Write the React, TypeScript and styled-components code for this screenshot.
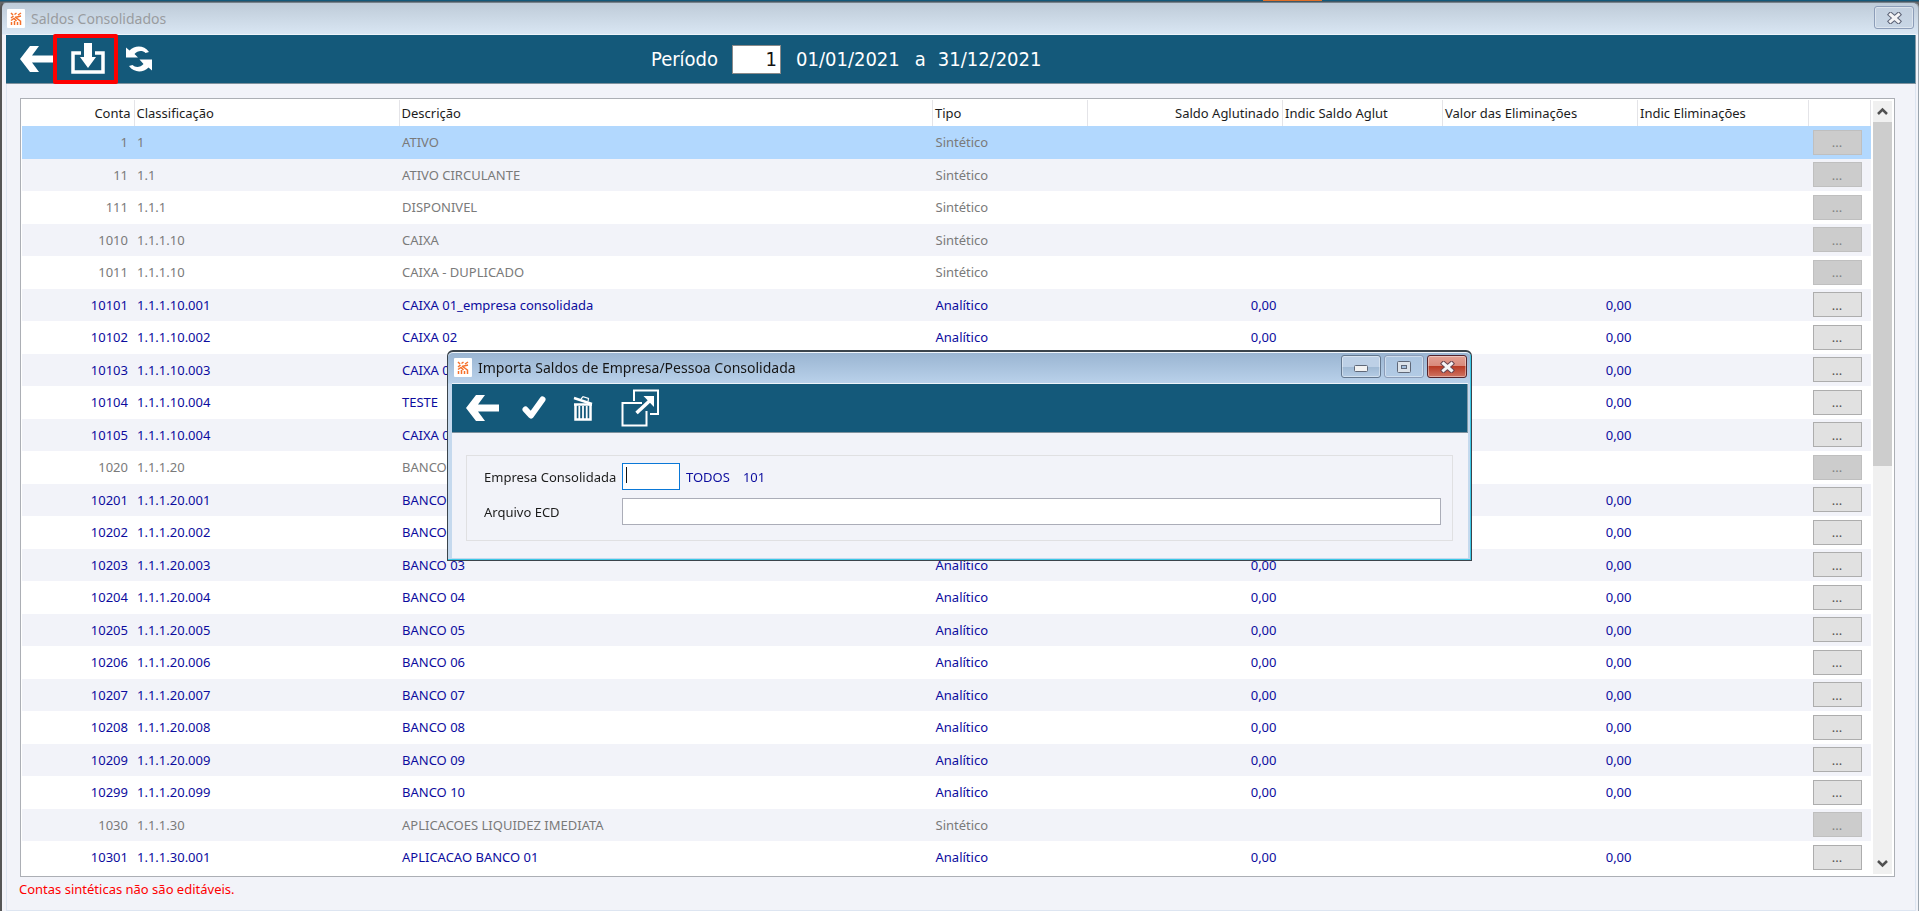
import React from 'react';
import styled, { createGlobalStyle } from 'styled-components';

const GlobalStyle = createGlobalStyle`
  *, *::before, *::after { box-sizing: border-box; }
  body {
    margin: 0;
    background: #f2f3f9;
    color: #1c1c1c;
    font: 13px/18px "Noto Sans", "Liberation Sans", sans-serif;
  }
  button, input { font: inherit; color: inherit; }
  button { padding: 0; cursor: pointer; }
`;

const TEAL = '#14597a';

const Page = styled.div`
  min-height: 100vh;
  display: flex;
  flex-direction: column;
  background: #666;
`;

const TopStrip = styled.div`
  height: 2px;
  flex: none;
  display: flex;
  background: ${TEAL};
  border-bottom: 1px solid #3f5866;
`;

const ActiveTab = styled.div`
  width: 59px;
  height: 1px;
  margin-left: 1263px;
  background: #e07028;
`;

const MainWindow = styled.main`
  flex: 1;
  display: flex;
  flex-direction: column;
  padding: 0 2px 0 4px;
  border-top: 1px solid #77828b;
  border-left: 2px solid #555;
  border-right: 1px solid #9aa4ae;
  border-radius: 6px 6px 0 0;
  background: linear-gradient(#becbd8, #d9e6f3 31px, #f2f3f9 32px);
`;

const TitleBar = styled.header<{ $active?: boolean }>`
  display: flex;
  align-items: center;
  height: 32px;
  padding: ${p => (p.$active ? '0 1px 0 2px' : '0 2px 0 1px')};
  border-bottom: 1px solid #eef4fa;
  color: ${p => (p.$active ? '#161616' : '#999ca0')};
`;

const Title = styled.h1`
  flex: 1;
  margin: 0 0 0 6px;
  font-size: 14px;
  line-height: 20px;
  font-weight: 400;
`;

const LogoBox = styled.span`
  display: flex;
  align-items: center;
  justify-content: center;
  width: 18px;
  height: 19px;
  background: #fff;
  border-radius: 1px;
`;

const CaptionButtons = styled.div`
  display: flex;
  gap: 3px;
  padding-bottom: 2px;
`;

const captionStyles = {
  idle: 'linear-gradient(#c3d0df, #c8d6e5)',
  normal: 'linear-gradient(#bdd0e6 50%, #9fb9d4 51%, #b5cce4)',
  faded: 'linear-gradient(#acc5e0, #b2cbe5)',
  close: 'linear-gradient(#e2a093, #d9897b 48%, #b93b25 50%, #cf7463)',
};

const CaptionButton = styled.button<{ $kind: keyof typeof captionStyles }>`
  display: flex;
  align-items: center;
  justify-content: center;
  width: 40px;
  height: 23px;
  border: 1px solid ${p => (p.$kind === 'close' ? '#54242c' : p.$kind === 'normal' ? '#64788f' : '#8c9db8')};
  border-radius: 3px;
  background: ${p => captionStyles[p.$kind]};
  box-shadow: inset 0 0 0 1px rgba(255, 255, 255, 0.4);
`;

const Toolbar = styled.div`
  display: flex;
  align-items: stretch;
  height: 49px;
  background: ${TEAL};
  border-right: 1px solid #8298a5;
  border-bottom: 1px solid #7f929e;
`;

const Tools = styled.div`
  display: flex;
  flex: 0 0 645px;
  padding-left: 14px;
`;

const ToolButton = styled.button<{ $width: number; $marked?: boolean }>`
  position: relative;
  display: flex;
  align-items: center;
  justify-content: center;
  width: ${p => p.$width}px;
  padding-left: ${p => (p.$marked ? 4 : 0)}px;
  border: 0;
  background: none;
  color: #fff;

  &::after {
    content: '';
    display: ${p => (p.$marked ? 'block' : 'none')};
    position: absolute;
    inset: -1px 0;
    border: 4px solid #fe0000;
    border-radius: 2px;
  }
`;

const Period = styled.div`
  display: flex;
  align-items: center;
  color: #fff;
  font: 20px/24px "DejaVu Sans Condensed", "DejaVu Sans", sans-serif;
  white-space: nowrap;
`;

const PeriodInput = styled.input`
  width: 49px;
  height: 29px;
  margin: 0 15px 0 14px;
  padding: 0 3px;
  border: 1px solid #8a8a8a;
  background: #fff;
  color: #111;
  text-align: right;
`;

const DateText = styled.time`
  margin-right: 15px;
`;

const Until = styled.span`
  width: 23px;
`;

const Content = styled.section`
  flex: 1;
  padding: 14px 20px 10px 13px;
  background: #f2f3f9;
  border: 0 solid #dde5f1;
  border-width: 0 1px 1px;
`;

const GridFrame = styled.div`
  display: flex;
  align-items: stretch;
  padding: 1px 2px 2px 1px;
  border: 1px solid #acafb5;
  background: #fff;
`;

const Grid = styled.table`
  flex: 1;
  width: 0;
  table-layout: fixed;
  border-collapse: collapse;
  white-space: nowrap;
`;

const Col = styled.col<{ $width?: number }>`
  width: ${p => (p.$width ? `${p.$width}px` : 'auto')};
`;

const HeadCell = styled.th<{ $right?: boolean }>`
  height: 26px;
  padding: 0 3px 0 2px;
  border-right: 1px solid #e4e4e8;
  font-weight: 400;
  text-align: ${p => (p.$right ? 'right' : 'left')};
`;

const Row = styled.tr<{ $editable: boolean; $selected: boolean }>`
  height: 32px;
  background: ${p => (p.$selected ? '#b2d8fe' : '#fff')};
  color: ${p => (p.$editable ? '#0c0c9e' : '#7a7a7a')};

  &:nth-child(odd) { height: 33px; }
  &:nth-child(even) { background: #f2f3f9; }
`;

const Cell = styled.td<{ $right?: boolean }>`
  padding: 0 6px 1px 3px;
  text-align: ${p => (p.$right ? 'right' : 'left')};
`;

const MoreButton = styled.button`
  display: block;
  width: 49px;
  height: 25px;
  margin-left: 1px;
  border: 1px solid #adadad;
  background: #e1e1e1;
  color: #555;
  line-height: 22px;

  &:disabled {
    border-color: #bfbfbf;
    background: #ccc;
    color: #838383;
  }
`;

const Scrollbar = styled.div`
  display: flex;
  flex-direction: column;
  width: 19px;
  margin: 1px 0 0 2px;
  background: #f0f0f0;
`;

const ScrollButton = styled.button`
  display: flex;
  align-items: center;
  justify-content: center;
  height: 21px;
  border: 0;
  background: none;
`;

const Track = styled.div`
  flex: 1;
`;

const Thumb = styled.div`
  height: 47%;
  background: #cdcdcd;
`;

const Notice = styled.p`
  margin: 3px 0 0 -1px;
  color: #fe0000;
`;

const Overlay = styled.div`
  position: fixed;
  inset: 0;
  display: flex;
  align-items: center;
  justify-content: center;
`;

const Dialog = styled.div`
  width: min(1025px, 96vw);
  padding: 0 3px 2px 4px;
  border: 1px solid #3b444c;
  border-top-width: 2px;
  border-radius: 6px 6px 0 0;
  background: linear-gradient(#99b4d1, #b9d1ea 31px, #c5d9ee 32px);
  box-shadow: inset -1px -1px 0 #3cc8e6, inset 0 1px 0 #f0f6fc;
`;

const DialogBody = styled.form`
  padding: 22px 15px 17px 14px;
  background: #f2f3f9;
`;

const Fields = styled.div`
  display: grid;
  grid-template-columns: 138px 1fr;
  align-items: center;
  gap: 8px 0;
  padding: 7px 11px 15px 17px;
  border: 1px solid #e0e0e2;
`;

const FieldLine = styled.div`
  display: flex;
  align-items: center;
  color: #0c0c9e;
`;

const TextInput = styled.input<{ $short?: boolean }>`
  width: ${p => (p.$short ? '58px' : '100%')};
  height: 27px;
  padding: 0 3px;
  border: 1px solid ${p => (p.$short ? '#0a78d7' : '#abadb8')};
  background: ${p => (p.$short ? 'linear-gradient(#111, #111) 3px 3px / 1px 16px no-repeat #fff' : '#fff')};
  caret-color: transparent;
  outline: none;
`;

const CompanyName = styled.output`
  margin: 0 13px 0 6px;
`;

const Logo = () => (
  <LogoBox>
    <svg width="12" height="13" viewBox="0 0 12 13" stroke="#f5702a" strokeWidth="1.5" fill="none">
      <path d="M1 1l2 2M4.500 2.500 6.500 1M1 6l2.500-2M8 3l3-2M5 5.500 11 4M5 5l6 4.500M1 8.500l3-2 2.500 2.500M1.500 13V10M4.500 13V9M7.500 13v-3M10.500 13V9.500" />
    </svg>
  </LogoBox>
);

const BackIcon = () => (
  <svg width="33" height="28" viewBox="0 0 33 28" fill="currentColor">
    <path d="M0 14 10 1h9l-7 9.500h21v7H12L19 27h-9z" />
  </svg>
);

const ImportIcon = () => (
  <svg width="34" height="32" viewBox="0 0 34 32">
    <path d="M10 10H2v19h30V10h-8" fill="none" stroke="currentColor" strokeWidth="3.500" />
    <path d="M13 0h8v14h4L17 25 9 14h4z" fill="currentColor" />
  </svg>
);

const RefreshIcon = () => (
  <svg width="26" height="26" viewBox="0 0 26 26" fill="currentColor">
    <path d="M0 1.500 3.500 4.500C9-1 18-1 23 6l-3.500 1C16.500 4 11.500 4.500 8.500 8l3.500 3.500H0z" />
    <path d="M26 24.500 22.500 21.500C17 27 8 27 3 20l3.500-1c3 3 8 2.500 11-1L13.500 13.500H26z" />
  </svg>
);

const CheckIcon = () => (
  <svg width="24" height="24" viewBox="0 0 24 24">
    <path d="M3.500 13.500 9 19.500 20.500 3.500" fill="none" stroke="currentColor" strokeWidth="6" strokeLinecap="round" strokeLinejoin="round" />
  </svg>
);

const TrashIcon = () => (
  <svg width="21" height="25" viewBox="0 0 21 25" fill="none" stroke="currentColor">
    <path d="M1 2l18 6" strokeWidth="2.500" />
    <path d="M8 3l2-2.300 5.500 1.800-.5 3" strokeWidth="1.200" />
    <path d="M2.500 9v14.500h15V9M1 8.500h18" strokeWidth="2.500" />
    <path d="M6.300 10v13M10 10v13M13.700 10v13" strokeWidth="1.800" />
  </svg>
);

const ExpandIcon = () => (
  <svg width="39" height="38" viewBox="0 0 39 38" fill="none" stroke="currentColor" strokeWidth="2">
    <path d="M13 12V1.500h24V25h-8" />
    <path d="M21 14H1.500v22.500h24V22" />
    <path d="M15.500 24 29 11.500" strokeWidth="3.500" />
    <path d="M22.500 7H33v11z" fill="currentColor" stroke="none" />
  </svg>
);

const CrossIcon = ({ stroke = '#5c6376' }: { stroke?: string }) => (
  <svg width="15" height="12" viewBox="0 0 15 12" fill="none">
    <path d="M3.500 2.500 11.500 9.500M11.500 2.500 3.500 9.500" stroke={stroke} strokeWidth="5" strokeLinecap="square" />
    <path d="M3.500 2.500 11.500 9.500M11.500 2.500 3.500 9.500" stroke="#f4f4f6" strokeWidth="3" strokeLinecap="square" />
  </svg>
);

const MinimizeIcon = () => (
  <svg width="14" height="14" viewBox="0 0 14 14">
    <rect x="0.500" y="5.500" width="13" height="6" rx="1" fill="#f2f2f2" stroke="#5f6878" />
  </svg>
);

const MaximizeIcon = () => (
  <svg width="14" height="12" viewBox="0 0 14 12" stroke="#5f6878">
    <rect x="0.500" y="0.500" width="13" height="11" rx="1" fill="#dbe2e9" />
    <rect x="4.500" y="4.500" width="5" height="3" fill="#a5bfdc" />
  </svg>
);

const Chevron = ({ down }: { down?: boolean }) => (
  <svg width="11" height="9" viewBox="0 0 11 9" fill="none" stroke="#505050" strokeWidth="2.500">
    <path d={down ? 'M1 2l4.500 4.500L10 2' : 'M1 7l4.500-4.500L10 7'} />
  </svg>
);

const accounts: [string, string, string][] = [
  ['1', '1', 'ATIVO'],
  ['11', '1.1', 'ATIVO CIRCULANTE'],
  ['111', '1.1.1', 'DISPONIVEL'],
  ['1010', '1.1.1.10', 'CAIXA'],
  ['1011', '1.1.1.10', 'CAIXA - DUPLICADO'],
  ['10101', '1.1.1.10.001', 'CAIXA 01_empresa consolidada'],
  ['10102', '1.1.1.10.002', 'CAIXA 02'],
  ['10103', '1.1.1.10.003', 'CAIXA 03'],
  ['10104', '1.1.1.10.004', 'TESTE'],
  ['10105', '1.1.1.10.004', 'CAIXA 04'],
  ['1020', '1.1.1.20', 'BANCOS'],
  ['10201', '1.1.1.20.001', 'BANCO 01'],
  ['10202', '1.1.1.20.002', 'BANCO 02'],
  ['10203', '1.1.1.20.003', 'BANCO 03'],
  ['10204', '1.1.1.20.004', 'BANCO 04'],
  ['10205', '1.1.1.20.005', 'BANCO 05'],
  ['10206', '1.1.1.20.006', 'BANCO 06'],
  ['10207', '1.1.1.20.007', 'BANCO 07'],
  ['10208', '1.1.1.20.008', 'BANCO 08'],
  ['10209', '1.1.1.20.009', 'BANCO 09'],
  ['10299', '1.1.1.20.099', 'BANCO 10'],
  ['1030', '1.1.1.30', 'APLICACOES LIQUIDEZ IMEDIATA'],
  ['10301', '1.1.1.30.001', 'APLICACAO BANCO 01'],
];

const columns: { label: string; width?: number; right?: boolean }[] = [
  { label: 'Conta', width: 112, right: true },
  { label: 'Classificação', width: 265 },
  { label: 'Descrição' },
  { label: 'Tipo', width: 155 },
  { label: 'Saldo Aglutinado', width: 195, right: true },
  { label: 'Indic Saldo Aglut', width: 160 },
  { label: 'Valor das Eliminações', width: 195 },
  { label: 'Indic Eliminações', width: 171 },
  { label: '', width: 62 },
];

const AccountRow = ({ account, selected }: { account: [string, string, string]; selected: boolean }) => {
  const [code, classification, description] = account;
  const editable = code.length === 5;
  return (
    <Row $editable={editable} $selected={selected}>
      <Cell $right>{code}</Cell>
      <Cell>{classification}</Cell>
      <Cell>{description}</Cell>
      <Cell>{editable ? 'Analítico' : 'Sintético'}</Cell>
      <Cell $right>{editable && '0,00'}</Cell>
      <Cell />
      <Cell $right>{editable && '0,00'}</Cell>
      <Cell />
      <Cell>
        <MoreButton type="button" disabled={!editable}>...</MoreButton>
      </Cell>
    </Row>
  );
};

const ImportDialog = () => (
  <Overlay>
    <Dialog role="dialog" aria-labelledby="dialog-title">
      <TitleBar $active>
        <Logo />
        <Title as="h2" id="dialog-title">Importa Saldos de Empresa/Pessoa Consolidada</Title>
        <CaptionButtons>
          <CaptionButton $kind="normal" aria-label="Minimizar"><MinimizeIcon /></CaptionButton>
          <CaptionButton $kind="faded" aria-label="Maximizar"><MaximizeIcon /></CaptionButton>
          <CaptionButton $kind="close" aria-label="Fechar"><CrossIcon stroke="#6a4650" /></CaptionButton>
        </CaptionButtons>
      </TitleBar>
      <Toolbar>
        <Tools>
          <ToolButton $width={33} aria-label="Voltar"><BackIcon /></ToolButton>
          <ToolButton $width={69} aria-label="Confirmar"><CheckIcon /></ToolButton>
          <ToolButton $width={31} aria-label="Excluir"><TrashIcon /></ToolButton>
          <ToolButton $width={83} aria-label="Abrir"><ExpandIcon /></ToolButton>
        </Tools>
      </Toolbar>
      <DialogBody>
        <Fields>
          <label htmlFor="empresa">Empresa Consolidada</label>
          <FieldLine>
            <TextInput id="empresa" $short autoFocus />
            <CompanyName htmlFor="empresa">TODOS</CompanyName>
            <span>101</span>
          </FieldLine>
          <label htmlFor="arquivo">Arquivo ECD</label>
          <TextInput id="arquivo" />
        </Fields>
      </DialogBody>
    </Dialog>
  </Overlay>
);

export default function App() {
  return (
    <Page>
      <GlobalStyle />
      <TopStrip><ActiveTab /></TopStrip>
      <MainWindow>
        <TitleBar>
          <Logo />
          <Title>Saldos Consolidados</Title>
          <CaptionButtons>
            <CaptionButton $kind="idle" aria-label="Fechar"><CrossIcon /></CaptionButton>
          </CaptionButtons>
        </TitleBar>
        <Toolbar>
          <Tools>
            <ToolButton $width={33} aria-label="Voltar"><BackIcon /></ToolButton>
            <ToolButton $width={65} $marked aria-label="Importar"><ImportIcon /></ToolButton>
            <ToolButton $width={42} aria-label="Atualizar"><RefreshIcon /></ToolButton>
          </Tools>
          <Period>
            <label htmlFor="periodo">Período</label>
            <PeriodInput id="periodo" defaultValue="1" />
            <DateText dateTime="2021-01-01">01/01/2021</DateText>
            <Until>a</Until>
            <DateText dateTime="2021-12-31">31/12/2021</DateText>
          </Period>
        </Toolbar>
        <Content>
          <GridFrame>
            <Grid>
              <colgroup>
                {columns.map(c => <Col key={c.label} $width={c.width} />)}
              </colgroup>
              <thead>
                <tr>
                  {columns.map(c => <HeadCell key={c.label} $right={c.right}>{c.label}</HeadCell>)}
                </tr>
              </thead>
              <tbody>
                {accounts.map((a, i) => <AccountRow key={a[1] + a[0]} account={a} selected={i === 0} />)}
              </tbody>
            </Grid>
            <Scrollbar>
              <ScrollButton aria-label="Rolar para cima"><Chevron /></ScrollButton>
              <Track><Thumb /></Track>
              <ScrollButton aria-label="Rolar para baixo"><Chevron down /></ScrollButton>
            </Scrollbar>
          </GridFrame>
          <Notice>Contas sintéticas não são editáveis.</Notice>
        </Content>
      </MainWindow>
      <ImportDialog />
    </Page>
  );
}
